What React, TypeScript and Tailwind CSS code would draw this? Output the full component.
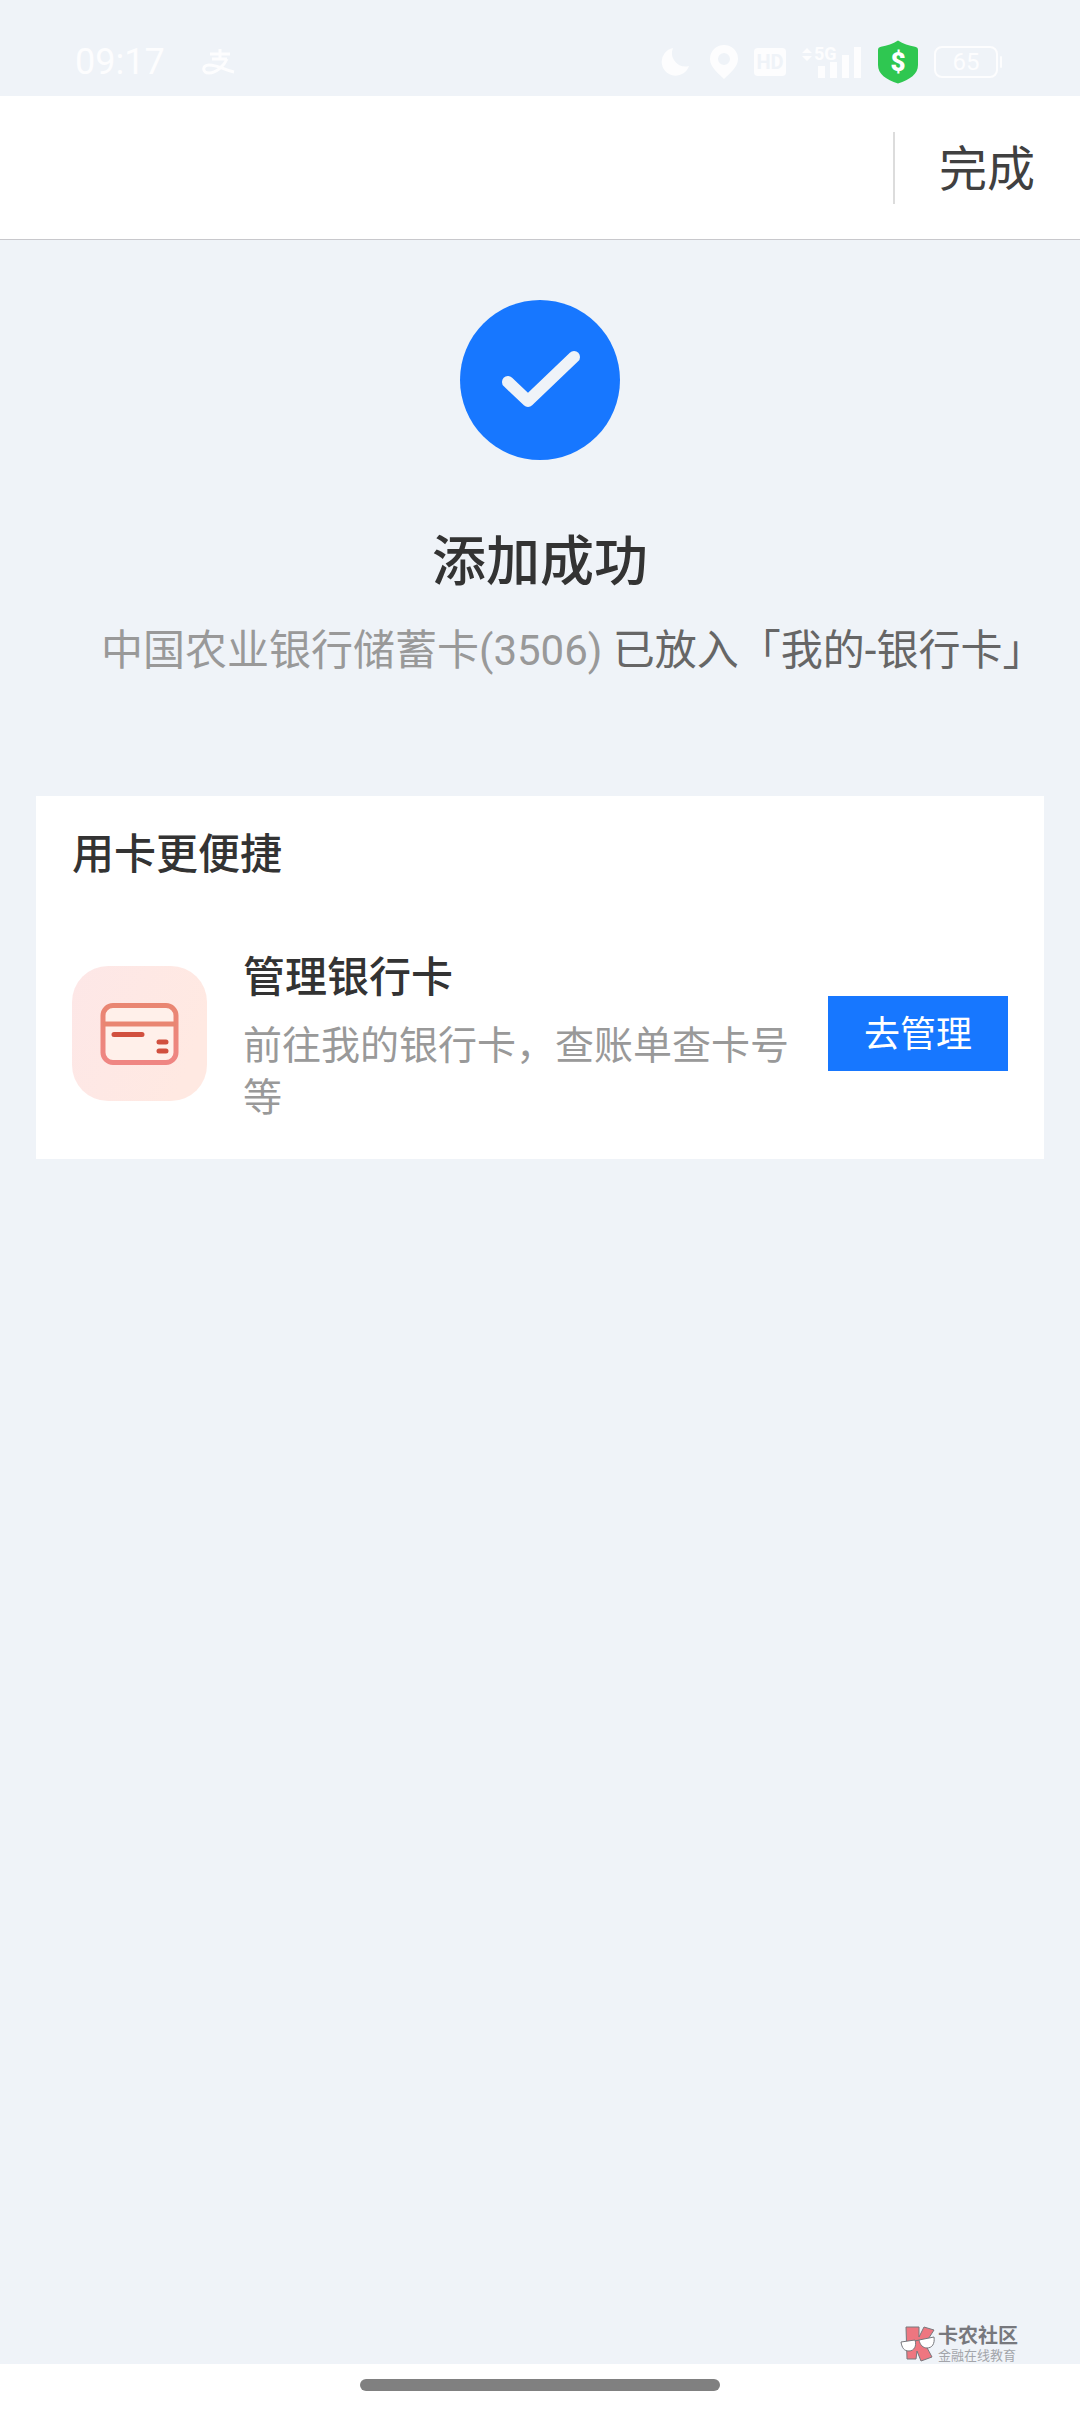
const AlipayMark = () => (
  <svg viewBox="0 0 36 28" className="h-7 w-9" fill="none" stroke="#fdfdfe" strokeWidth="3" aria-hidden="true">
    <path d="M9 6h20M19 1v10M11 11h15" />
    <path d="M26 11C23 18 15 25 8 25c-7 0-7-8 0-8 9 0 15 5 25 7" />
  </svg>
);

const MoonIcon = () => (
  <svg viewBox="0 0 30 30" className="mr-1 size-[30px]" fill="#fdfdfe" aria-hidden="true">
    <path d="M13 1a14 14 0 1 0 16 18A13.500 13.500 0 0 1 13 1z" />
  </svg>
);

const PinIcon = () => (
  <svg viewBox="0 0 28 34" className="h-[34px] w-7" fill="#fdfdfe" fillRule="evenodd" aria-hidden="true">
    <path d="M14 0a14 14 0 0 0-14 14c0 8 8 14 14 20 6-6 14-12 14-20A14 14 0 0 0 14 0zm0 8a6 6 0 1 1 0 12 6 6 0 0 1 0-12z" />
  </svg>
);

const SignalIcon = () => (
  <svg viewBox="0 0 60 44" className="h-11 w-[60px]" fill="#fdfdfe" aria-hidden="true">
    <path d="M5 8l5 5H0zM5 21l5-5H0z" />
    <text x="12" y="20" fontSize="18" fontWeight="700" fontFamily="Roboto, sans-serif">
      5G
    </text>
    <path d="M16 26h7v12h-7zM28 22h7v16h-7zM40 15h7v23h-7zM52 7h7v31h-7z" />
  </svg>
);

const ShieldIcon = () => (
  <svg viewBox="0 0 40 44" className="h-11 w-10" aria-hidden="true">
    <path
      d="M20 0.500c5 3.500 11 5 17 6.200 2 .4 3 1.300 3 3.300v15c0 9-8 14.500-20 18.500C8 39.500 0 34 0 25V10c0-2 1-2.900 3-3.300C9 5.500 15 4 20 .5z"
      fill="#2fc751"
    />
    <text x="20" y="31" fontSize="26" fontWeight="900" textAnchor="middle" fill="#fff" fontFamily="Roboto, sans-serif">
      $
    </text>
  </svg>
);

const SuccessIcon = () => (
  <svg viewBox="0 0 160 160" className="size-40" role="img" aria-label="成功">
    <circle cx="80" cy="80" r="80" fill="#1777ff" />
    <path
      d="M48 82l20 19L114 57"
      fill="none"
      stroke="#eff3f8"
      strokeWidth="12"
      strokeLinecap="round"
      strokeLinejoin="round"
    />
  </svg>
);

const BankCardIcon = () => (
  <svg viewBox="0 0 135 135" className="size-[135px] shrink-0" aria-hidden="true">
    <defs>
      <linearGradient id="tile" x1="0" y1="0" x2="1" y2="0.4">
        <stop offset="0" stopColor="#fde7e7" />
        <stop offset="1" stopColor="#ffe9e2" />
      </linearGradient>
      <linearGradient id="frame" x1="0" y1="0" x2="0" y2="1">
        <stop offset="0" stopColor="#e98672" />
        <stop offset="1" stopColor="#ef8683" />
      </linearGradient>
    </defs>
    <rect width="135" height="135" rx="36" fill="url(#tile)" />
    <rect x="31" y="39.500" width="73" height="57" rx="10" fill="#fff0ea" stroke="url(#frame)" strokeWidth="5" />
    <path d="M31 58h73" stroke="#e98672" strokeWidth="5" />
    <path d="M42 68.500h28M87 76h7M87 85h7" stroke="#d1503f" strokeWidth="5" strokeLinecap="round" />
  </svg>
);

const CommunityLogo = () => (
  <svg viewBox="0 0 36 36" className="size-9" stroke="#77787d" strokeLinejoin="round" aria-hidden="true">
    <path d="M6 1h13v10l5-10 10 3-9 14 7 13-11 4-4-10-1 8H7z" fill="#ee7680" />
    <path d="M1 16l14-2c2 6-1 11-6 11s-7-3-8-9z" fill="#fff" />
    <path d="M19 14l15-3c1 7-2 11-7 11-4 0-7-3-8-8z" fill="#fff" />
    <path d="M15 15l4-1" />
  </svg>
);

const StatusBar = () => (
  <div className="flex h-24 items-center justify-between pt-7 pr-[78px] pl-[75px] text-[#fdfdfe]">
    <div className="flex items-center gap-9">
      <span className="text-[36px] leading-none">09:17</span>
      <AlipayMark />
    </div>
    <div className="flex items-center gap-4">
      <MoonIcon />
      <PinIcon />
      <span className="flex h-7 w-8 items-center justify-center rounded bg-[#fdfdfe] text-[20px] font-bold text-[#eff3f8]">
        HD
      </span>
      <SignalIcon />
      <ShieldIcon />
      <div className="flex items-center gap-0.5">
        <span className="flex h-8 w-16 items-center justify-center rounded-lg border-2 border-[#fdfdfe] text-[24px]">
          65
        </span>
        <span className="h-3 w-0.5 rounded-full bg-[#fdfdfe]" />
      </div>
    </div>
  </div>
);

const Header = () => (
  <header className="flex h-36 items-center justify-end border-b border-[#c8c8cc] bg-white pr-[45px]">
    <button type="button" className="h-18 border-l-2 border-[#dcdcdc] pt-1 pl-11 text-[48px] leading-none text-[#404040]">
      完成
    </button>
  </header>
);

const ManageCard = () => (
  <section className="mx-9 mt-[115px] bg-white px-9 pt-[29px] pb-[35px]">
    <h2 className="text-[42px] leading-[60px] font-medium text-[#333]">用卡更便捷</h2>
    <div className="mt-[57px] flex items-center">
      <BankCardIcon />
      <div className="ml-9 min-w-0 flex-1 pt-1.5">
        <h3 className="text-[42px] leading-[60px] font-medium text-[#333]">管理银行卡</h3>
        <p className="mt-3 text-[39px] leading-[52px] text-[#999]">前往我的银行卡，查账单查卡号等</p>
      </div>
      <button
        type="button"
        className="ml-9 h-[75px] w-45 shrink-0 bg-[#1777ff] pt-1 text-[36px] leading-none text-white"
      >
        去管理
      </button>
    </div>
  </section>
);

const Watermark = () => (
  <div className="absolute right-[62px] bottom-0 flex items-center gap-0.5">
    <CommunityLogo />
    <div className="text-[#77787d]">
      <p className="text-[20px] leading-6 font-bold">卡农社区</p>
      <p className="text-[13px] leading-4 text-[#a3a5aa]">金融在线教育</p>
    </div>
  </div>
);

export default function App() {
  return (
    <div
      lang="zh-CN"
      className="flex min-h-screen flex-col bg-[#eff3f8] font-[Roboto,'Noto_Sans_CJK_SC',sans-serif]"
    >
      <StatusBar />
      <Header />
      <main className="relative flex-1 pt-[60px]">
        <div className="flex flex-col items-center">
          <SuccessIcon />
          <h1 className="mt-[63px] text-[54px] leading-20 font-medium text-[#333]">添加成功</h1>
        </div>
        <p className="mt-[18px] pl-[101px] text-[42px] leading-[60px] whitespace-nowrap text-[#666]">
          <span className="text-[#999]">中国农业银行储蓄卡(3506)</span> 已放入「我的-银行卡」
        </p>
        <ManageCard />
        <Watermark />
      </main>
      <footer className="flex h-12 justify-center bg-white pt-[15px]">
        <div className="h-3 w-1/3 rounded-full bg-[#808080]" />
      </footer>
    </div>
  );
}
